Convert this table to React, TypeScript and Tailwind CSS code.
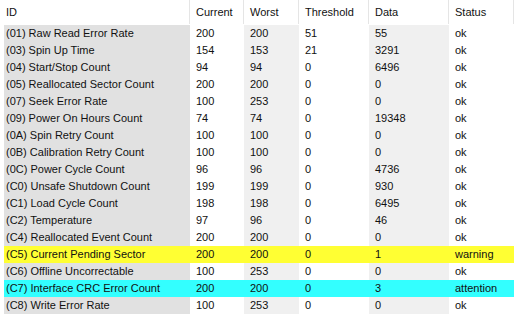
const columns = [
  { title: "ID", w: "w-[190px]", bg: "bg-[#e1e1e1]" },
  { title: "Current", w: "w-[54px]", bg: "" },
  { title: "Worst", w: "w-[55px]", bg: "bg-[#f0f0f0]" },
  { title: "Threshold", w: "w-[70px]", bg: "" },
  { title: "Data", w: "w-[80px]", bg: "bg-[#f0f0f0]" },
  { title: "Status", w: "w-[65px]", bg: "" },
];

const rows: [string, string, string, string, string, string, string?][] = [
  ["(01) Raw Read Error Rate", "200", "200", "51", "55", "ok"],
  ["(03) Spin Up Time", "154", "153", "21", "3291", "ok"],
  ["(04) Start/Stop Count", "94", "94", "0", "6496", "ok"],
  ["(05) Reallocated Sector Count", "200", "200", "0", "0", "ok"],
  ["(07) Seek Error Rate", "100", "253", "0", "0", "ok"],
  ["(09) Power On Hours Count", "74", "74", "0", "19348", "ok"],
  ["(0A) Spin Retry Count", "100", "100", "0", "0", "ok"],
  ["(0B) Calibration Retry Count", "100", "100", "0", "0", "ok"],
  ["(0C) Power Cycle Count", "96", "96", "0", "4736", "ok"],
  ["(C0) Unsafe Shutdown Count", "199", "199", "0", "930", "ok"],
  ["(C1) Load Cycle Count", "198", "198", "0", "6495", "ok"],
  ["(C2) Temperature", "97", "96", "0", "46", "ok"],
  ["(C4) Reallocated Event Count", "200", "200", "0", "0", "ok"],
  ["(C5) Current Pending Sector", "200", "200", "0", "1", "warning", "yellow"],
  ["(C6) Offline Uncorrectable", "100", "253", "0", "0", "ok"],
  ["(C7) Interface CRC Error Count", "200", "200", "0", "3", "attention", "cyan"],
  ["(C8) Write Error Rate", "100", "253", "0", "0", "ok"],
];

export default function App() {
  return (
    <div
      className="w-[529px] h-[321px] bg-white text-[11px] text-[#111] overflow-hidden"
      style={{ fontFamily: '"Liberation Sans", Arial, sans-serif' }}
    >
      {/* header */}
      <div className="flex h-[24px]">
        {columns.map((c) => (
          <div
            key={c.title}
            className={`${c.w} h-full flex items-center border-r border-[#e5e5e5] pl-[6px]`}
          >
            {c.title}
          </div>
        ))}
      </div>

      {/* rows */}
      <div className="pt-[1px]">
        {rows.map((r) => {
          const hl =
            r[6] === "yellow" ? "bg-[#ffff33]" : r[6] === "cyan" ? "bg-[#33ffff]" : "";
          return (
            <div key={r[0]} className="flex h-[17px]">
              <div className={`ml-[4px] w-[186px] h-full flex items-center pl-[2px] ${hl || columns[0].bg}`}>
                {r[0]}
              </div>
              {columns.slice(1).map((c, i) => (
                <div
                  key={c.title}
                  className={`${c.w} h-full flex items-center pl-[6px] ${hl || c.bg}`}
                >
                  {r[i + 1]}
                </div>
              ))}
            </div>
          );
        })}
      </div>
    </div>
  );
}
